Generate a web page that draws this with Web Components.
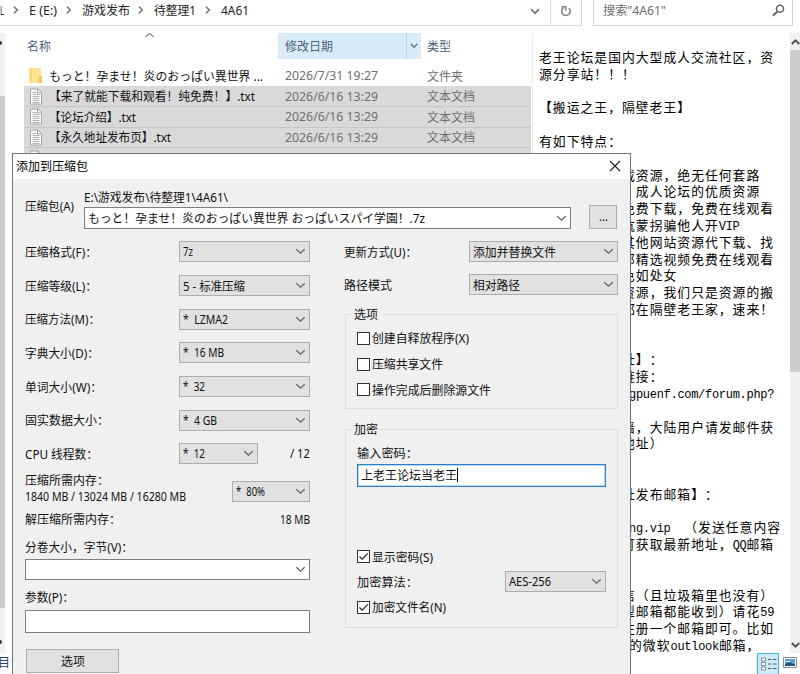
<!DOCTYPE html>
<html lang="zh-CN">
<head>
<meta charset="utf-8">
<title>4A61</title>
<style>
html,body{margin:0;width:800px;height:674px;overflow:hidden;background:#fff}
body{position:relative;font-family:"Noto Sans","Noto Sans CJK SC",sans-serif;font-size:12px;color:#111;text-spacing-trim:space-all}
archive-dialog{position:absolute;left:12px;top:153px}
</style>
</head>
<body>
<file-explorer></file-explorer>
<archive-dialog></archive-dialog>
<script>
const define = (name, markup, init) => {
  const tpl = document.createElement('template');
  tpl.innerHTML = markup;
  customElements.define(name, class extends HTMLElement {
    connectedCallback() {
      if (this.shadowRoot) return;
      this.attachShadow({mode: 'open'}).appendChild(tpl.content.cloneNode(true));
      if (init) init(this, this.shadowRoot);
    }
  });
};

define('preview-pane', `
<style>
:host{display:block;box-sizing:border-box;width:258px;padding:49px 0 0 6px;border-left:1px solid #ececec;overflow:hidden;color:#000;
 font-family:"Noto Sans CJK SC",sans-serif;font-size:12.8px}
div{height:16.8px;line-height:16.8px;white-space:pre;letter-spacing:1.03px}
div.c{padding-left:83px} div.h{padding-left:90px}
i{font:normal 12px "Liberation Mono",monospace;letter-spacing:-.29px}
</style>
<div>老王论坛是国内大型成人交流社区，资</div>
<div>源分享站！！！</div>
<div></div>
<div>【搬运之王，隔壁老王】</div>
<div></div>
<div>有如下特点：</div>
<div></div>
<div class="c">载资源，绝无任何套路</div>
<div class="c">　成人论坛的优质资源</div>
<div class="c">免费下载，免费在线观看</div>
<div class="c">坑蒙拐骗他人开<i>VIP</i></div>
<div class="c">其他网站资源代下载、找</div>
<div class="c">部精选视频免费在线观看</div>
<div class="c">色如处女</div>
<div class="c">资源，我们只是资源的搬</div>
<div class="c">都在隔壁老王家，速来！</div>
<div></div>
<div></div>
<div class="c">址】：</div>
<div class="c">链接：</div>
<div class="h"><i>gpuenf.com/forum.php?</i></div>
<div></div>
<div class="c">墙，大陆用户请发邮件获</div>
<div class="c">地址）</div>
<div></div>
<div></div>
<div class="c">址发布邮箱】：</div>
<div></div>
<div class="h"><i>ng.vip</i>　（发送任意内容</div>
<div class="c">可获取最新地址，<i>QQ</i>邮箱</div>
<div></div>
<div></div>
<div class="c">信（且垃圾箱里也没有）</div>
<div class="c">型邮箱都能收到）请花<i>59</i></div>
<div class="c">注册一个邮箱即可。比如</div>
<div class="h">的微软<i>outlook</i>邮箱，</div>
`);

define('file-row', `
<style>
:host{display:grid;grid-template-columns:21px 236px 142px 1fr;align-items:center;height:20.7px;box-sizing:border-box;padding-left:4px;white-space:nowrap;color:#707070}
:host([sel]){background:#d9d9d9;border-bottom:1px solid #c6c6c6}
.n{color:#111}
svg{display:block}
.doc{display:none} :host([sel]) .doc{display:block} :host([sel]) .fold{display:none}
</style>
<span>
<svg class="fold" width="16" height="17" viewBox="0 0 16 17"><path d="M1.500 1h11.500v13l-1 2H1.500z" fill="#ffe391"/><path d="M1.500 1H4v15H1.500z" fill="#f8d775"/><path d="M10.500 9h3.500v7h-3.500z" fill="#f2c85c"/></svg>
<svg class="doc" width="16" height="17" viewBox="0 0 16 17"><path d="M2.500 1h7.500l3.500 3.500V16h-11z" fill="#fbfbfb" stroke="#a2a2a2"/><path d="M9.500 1v4h4" fill="none" stroke="#a2a2a2"/><path d="M4.500 4.500h4M4.500 6.500h7M4.500 8.500h7M4.500 10.500h7M4.500 12.500h7M4.500 14.500h7" stroke="#a8a8a8" stroke-width=".9"/></svg>
</span>
<span class="n"><slot></slot></span>
<slot name="d"></slot>
<slot name="t"></slot>
`);

define('side-scroll', `
<style>
:host{display:flex;flex-direction:column;align-items:center;background:#f0f0f0;overflow:hidden}
i{display:block;width:100%;background:#cdcdcd;height:var(--th)}
b{flex:1} svg{flex:none;display:block}
.u{margin:var(--ut) 0 var(--ub)} .d{margin-bottom:4px}
.dot{display:none;flex:none;width:4px;height:4px;border-radius:0 4px 4px 0;background:#333;margin:8px auto 0 -2px}
:host(.nav) svg{display:none}
:host(.nav) .dot{display:block}
:host(.nav) i{margin-top:51px}
:host(.nav) .e{margin:0 auto 9px -2px}
</style>
<span class="dot"></span>
<svg class="u" width="9" height="8" viewBox="0 0 9 8"><path d="M.8 6 4.500 2.300 8.200 6" fill="none" stroke="#505050" stroke-width="2"/></svg>
<i></i><b></b>
<span class="dot e"></span>
<svg class="d" width="9" height="8" viewBox="0 0 9 8"><path d="M.8 2 4.500 5.700 8.200 2" fill="none" stroke="#505050" stroke-width="2"/></svg>
`);

define('file-explorer', `
<style>
:host{display:flex;flex-direction:column;width:800px;height:674px}
.top{display:flex;height:26px;box-sizing:border-box;white-space:nowrap;overflow:hidden}
.addr{flex:none;width:582px;box-sizing:border-box;border:solid #dadada;border-width:0 1px 1px 0;display:flex}
.crumb{display:grid;grid-template-columns:29px 53px 72px 67px 1fr;width:521px;height:20px;align-items:center;color:#222}
.crumb span{display:flex;align-items:center;justify-content:space-between}
.crumb svg{margin-right:10px}
.drop{width:31px;height:25px;display:flex;justify-content:center;align-items:center;border-right:1px solid #dadada;box-sizing:border-box;padding-bottom:3px}
.ref{width:30px;height:21px;display:flex;justify-content:center;align-items:center}
.search{margin-left:11px;width:200px;height:26px;box-sizing:border-box;border:1px solid #d5d5d5;border-top:0;display:flex;justify-content:space-between;padding:0 7px 5px 9px;align-items:center;color:#6d6d6d}
.main{display:flex;height:620px;margin-top:7px}
.nav{width:5px;--th:512px}
.list{width:527px;box-sizing:border-box;padding:0 1px 0 19px;overflow:hidden}
.head{display:grid;grid-template-columns:254px 128px 15px 1fr;height:26px;align-items:center;color:#4c607a;margin-bottom:6.500px;position:relative}
.head>*{height:26px;display:flex;align-items:center;box-sizing:border-box}
.head>.nm{padding-left:3px}.date{background:#d9ebf9;padding-left:7px}.ar{background:#d9ebf9;border-left:1px solid #b7d5ea;justify-content:center}.ty{padding-left:6px}
.head>.sort{position:absolute;left:120px;top:-2px;height:8px}
side-scroll.r{width:10px;--ut:5px;--ub:4px;--th:322px}
.foot{height:21px;display:flex;justify-content:space-between;color:#25406e}
.foot .l{margin-left:-2px;line-height:20px}
.ic{display:flex;gap:4px;padding-right:3px}
</style>
<div class="top">
 <div class="addr">
  <div class="crumb">
   <span><fit-text w="4" s="12.5">L</fit-text><svg width="6" height="8" viewBox="0 0 6 8"><path d="M1 .8 4.300 4 1 7.200" fill="none" stroke="#666" stroke-width="1.300"/></svg></span>
   <span><fit-text w="28" s="12.5">E (E:)</fit-text><svg width="6" height="8" viewBox="0 0 6 8"><path d="M1 .8 4.300 4 1 7.200" fill="none" stroke="#666" stroke-width="1.300"/></svg></span>
   <span><fit-text w="48" s="12">游戏发布</fit-text><svg width="6" height="8" viewBox="0 0 6 8"><path d="M1 .8 4.300 4 1 7.200" fill="none" stroke="#666" stroke-width="1.300"/></svg></span>
   <span><fit-text w="42" s="12">待整理1</fit-text><svg width="6" height="8" viewBox="0 0 6 8"><path d="M1 .8 4.300 4 1 7.200" fill="none" stroke="#666" stroke-width="1.300"/></svg></span>
   <span><fit-text w="28" s="12">4A61</fit-text></span>
  </div>
  <div class="drop"><svg width="10" height="7" viewBox="0 0 10 7"><path d="M1 1.200 5 5.200 9 1.200" fill="none" stroke="#777" stroke-width="1.800"/></svg></div>
  <div class="ref"><svg width="12" height="12" viewBox="0 0 12 12"><path d="M8.800 3A4.300 4.300 0 1 1 3.400 2.800" fill="none" stroke="#808080" stroke-width="1.500"/><path d="M1.500 1.700H5.700V5.700" fill="none" stroke="#808080" stroke-width="1.500"/></svg></div>
 </div>
 <div class="search"><fit-text w="63" s="12">搜索"4A61"</fit-text><svg width="13" height="13" viewBox="0 0 13 13"><circle cx="8" cy="4.800" r="3.500" fill="none" stroke="#666" stroke-width="1.600"/><path d="M5.300 7.500 1 11.700" stroke="#666" stroke-width="1.900"/></svg></div>
</div>
<div class="main">
 <side-scroll class="nav"></side-scroll>
 <div class="list">
  <div class="head">
   <span class="sort"><svg width="11" height="6" viewBox="0 0 11 6"><path d="M1.500 5 5.500 1.200 9.500 5" fill="none" stroke="#888" stroke-width="1.200"/></svg></span>
   <span class="nm"><fit-text w="24" s="12">名称</fit-text></span><span class="date"><fit-text w="48" s="12">修改日期</fit-text></span>
   <span class="ar"><svg width="8" height="6" viewBox="0 0 8 6"><path d="M.8 1 4 4.200 7.200 1" fill="none" stroke="#5a7288" stroke-width="1.400"/></svg></span>
   <span class="ty"><fit-text w="24" s="12">类型</fit-text></span>
  </div>
  <file-row><fit-text w="214" s="12">もっと！孕ませ！炎のおっぱい異世界 ...</fit-text><fit-text slot="d" w="93" s="12">2026/7/31 19:27</fit-text><fit-text slot="t" w="36" s="12">文件夹</fit-text></file-row>
  <file-row sel><fit-text w="206" s="12">【来了就能下载和观看！纯免费！】.txt</fit-text><fit-text slot="d" w="93" s="12">2026/6/16 13:29</fit-text><fit-text slot="t" w="48" s="12">文本文档</fit-text></file-row>
  <file-row sel><fit-text w="87" s="12">【论坛介绍】.txt</fit-text><fit-text slot="d" w="93" s="12">2026/6/16 13:29</fit-text><fit-text slot="t" w="48" s="12">文本文档</fit-text></file-row>
  <file-row sel><fit-text w="122" s="12">【永久地址发布页】.txt</fit-text><fit-text slot="d" w="93" s="12">2026/6/16 13:29</fit-text><fit-text slot="t" w="48" s="12">文本文档</fit-text></file-row>
  <file-row sel></file-row>
 </div>
 <preview-pane></preview-pane>
 <side-scroll class="r"></side-scroll>
</div>
<div class="foot"><span class="l">目</span>
 <span class="ic"><svg width="22" height="22" viewBox="0 0 22 22"><path d="M.5.5h21V23H.5z" fill="#cdeaf8" stroke="#45aee0"/><path d="M4.500 5h4v3h-4zM4.500 9.500h4v3h-4zM4.500 14h4v3h-4z" fill="#fff" stroke="#7a8894" stroke-width=".9"/><path d="M11 6.500h3.500M16 6.500h3.500M11 11h3.500M16 11h3.500M11 15.500h3.500M16 15.500h3.500" stroke="#4c5a66"/></svg>
 <svg width="14" height="22" viewBox="0 0 14 22"><path d="M.5 4.500h13v10H.5z" fill="#fff" stroke="#8a8a8a"/><path d="M2 6h10v7H2z" fill="#5d9cdc"/><path d="M2 13v-2l4-2 6 2.500V13z" fill="#24527e"/><path d="M3 8.500h4" stroke="#e8f4ff"/></svg></span>
</div>
<style>preview-pane{padding-top:16px}</style>
`);

define('win-combo', `
<style>
:host{display:flex;box-sizing:border-box;height:21px;align-items:center;justify-content:space-between;border:1px solid #adadad;background:#e1e1e1;padding:0 3px 0 3px;flex:none}
:host([edit]){background:#fff;border-color:#7f7f7f}
</style>
<span><slot></slot></span>
<svg width="11" height="7" viewBox="0 0 11 7"><path d="M1.300 1.200 5.500 5.200 9.700 1.200" fill="none" stroke="#606060" stroke-width="1.200"/></svg>
`);

define('win-check', `
<style>
:host{display:flex;align-items:center;gap:2px;height:26px}
i{width:13px;height:13px;box-sizing:border-box;border:1px solid #333;background:#fff;display:block}
svg{display:none} :host([on]) svg{display:block}
</style>
<i><svg width="11" height="11" viewBox="0 0 11 11"><path d="M1.500 5.500 4.200 8.200 9.800 2.300" fill="none" stroke="#222" stroke-width="1.200"/></svg></i><slot></slot>
`);

define('win-group', `
<style>
:host{display:block;box-sizing:border-box;border:1px solid #dcdcdc;padding:0 11px}
.t{display:flex;height:16px;margin:-9px 0 0 -5px}
.t span{background:#f0f0f0;padding:0 3px 0 2px;line-height:17px}
</style>
<div class="t"><span><slot name="title"></slot></span></div>
<slot></slot>
`);

define('win-button', `
<style>:host{display:flex;box-sizing:border-box;align-items:center;justify-content:center;background:#e1e1e1;border:1px solid #adadad}</style><slot></slot>
`);

define('opt-row', `
<style>:host{display:flex;box-sizing:border-box;align-items:center;justify-content:space-between}</style><slot></slot>
`);

define('archive-dialog', `
<style>
:host{display:block;box-sizing:border-box;width:619px;height:530px;background:#f0f0f0;border:1px solid #747474}
.title{height:25px;box-sizing:border-box;background:#fff;display:flex;align-items:center;justify-content:space-between;padding:0 9px 1px 3px;color:#000}
.arch{display:flex;height:56px;padding-left:12px;box-sizing:border-box}
.arch>.lb{width:59px;padding-top:18px}
.arch>.mid{width:487px;padding-top:11px}
.mid .p{height:17px;line-height:16px}
.mid win-combo{height:22px}
.arch win-button{width:28px;height:24px;margin:26px 0 0 18px;padding-bottom:2px}
.cols{display:flex;padding-left:12px}
.left{width:285px}
.left>opt-row{height:33.7px}
.w{width:131px}
.right{margin-left:34px;width:274px}
.right>opt-row{height:33px}
.right>opt-row win-combo{width:149px}
.mem{line-height:15.500px}
.in{box-sizing:border-box;height:23px;background:#fff;border:1px solid #7f7f7f}
.pw{border:1px solid #2a7fc9;display:flex;align-items:center;padding-left:3px;height:23px;box-shadow:inset 0 0 0 .5px #7db4e0;margin-bottom:57px;padding-bottom:2px}
.pw b{width:1px;height:14px;background:#000}
</style>
<div class="title"><fit-text w="72" s="12">添加到压缩包</fit-text><svg width="12" height="12" viewBox="0 0 12 12"><path d="M1 1 11 11M11 1 1 11" stroke="#222" stroke-width="1.200"/></svg></div>
<div class="arch">
 <div class="lb"><fit-text w="49" s="12">压缩包(A)</fit-text></div>
 <div class="mid"><div class="p"><fit-text w="144" s="12">E:\\游戏发布\\待整理1\\4A61\\</fit-text></div>
 <win-combo edit><fit-text w="337" s="12">もっと！孕ませ！炎のおっぱい異世界 おっぱいスパイ学園！.7z</fit-text></win-combo></div>
 <win-button><fit-text w="9" s="12">...</fit-text></win-button>
</div>
<div class="cols">
 <div class="left">
  <opt-row><fit-text w="72" s="12">压缩格式(F)：</fit-text><win-combo class="w"><fit-text w="10" s="12">7z</fit-text></win-combo></opt-row>
  <opt-row><fit-text w="72" s="12">压缩等级(L)：</fit-text><win-combo class="w"><fit-text w="62" s="12">5 - 标准压缩</fit-text></win-combo></opt-row>
  <opt-row><fit-text w="75" s="12">压缩方法(M)：</fit-text><win-combo class="w"><fit-text w="45" s="12">*&nbsp; LZMA2</fit-text></win-combo></opt-row>
  <opt-row><fit-text w="74" s="12">字典大小(D)：</fit-text><win-combo class="w"><fit-text w="41" s="12">*&nbsp; 16 MB</fit-text></win-combo></opt-row>
  <opt-row><fit-text w="77" s="12">单词大小(W)：</fit-text><win-combo class="w"><fit-text w="22" s="12">*&nbsp; 32</fit-text></win-combo></opt-row>
  <opt-row><fit-text w="84" s="12">固实数据大小：</fit-text><win-combo class="w"><fit-text w="34" s="12">*&nbsp; 4 GB</fit-text></win-combo></opt-row>
  <opt-row><fit-text w="73" s="12">CPU 线程数：</fit-text><win-combo style="width:79px;margin-left:81px;margin-right:auto"><fit-text w="22" s="12">*&nbsp; 12</fit-text></win-combo><fit-text w="20" s="12">/ 12</fit-text></opt-row>
  <opt-row style="height:36px"><div class="mem"><fit-text w="84" s="12">压缩所需内存：</fit-text><br><fit-text w="161" s="12">1840 MB / 13024 MB / 16280 MB</fit-text></div><win-combo style="width:78px;margin-top:5px"><fit-text w="29" s="12">*&nbsp; 80%</fit-text></win-combo></opt-row>
  <opt-row style="height:25px"><fit-text w="96" s="12">解压缩所需内存：</fit-text><fit-text w="30" s="12">18 MB</fit-text></opt-row>
  <opt-row style="height:27px;padding-top:3px"><fit-text w="108" s="12">分卷大小，字节(V)：</fit-text></opt-row>
  <win-combo edit></win-combo>
  <opt-row style="height:30px;padding-top:4px"><fit-text w="49" s="12">参数(P)：</fit-text></opt-row>
  <div class="in"></div>
  <win-button style="width:93px;height:24px;margin:16px 0 0 1px"><fit-text w="24" s="12">选项</fit-text></win-button>
 </div>
 <div class="right">
  <opt-row><fit-text w="73" s="12">更新方式(U)：</fit-text><win-combo><fit-text w="83" s="12">添加并替换文件</fit-text></win-combo></opt-row>
  <opt-row><fit-text w="48" s="12">路径模式</fit-text><win-combo><fit-text w="47" s="12">相对路径</fit-text></win-combo></opt-row>
  <win-group style="margin:13px 0 0 1px;height:95px"><fit-text slot="title" w="24" s="12">选项</fit-text>
   <div style="height:3px"></div>
   <win-check><fit-text w="97" s="12">创建自释放程序(X)</fit-text></win-check>
   <win-check><fit-text w="71" s="12">压缩共享文件</fit-text></win-check>
   <win-check style="height:25px"><fit-text w="119" s="12">操作完成后删除源文件</fit-text></win-check>
  </win-group>
  <win-group style="margin:20px 0 0 1px;height:199px"><fit-text slot="title" w="24" s="12">加密</fit-text>
   <opt-row style="height:27px;padding-top:4px"><fit-text w="61" s="12">输入密码：</fit-text></opt-row>
   <div class="in pw"><fit-text w="96" s="12">上老王论坛当老王</fit-text><b></b></div>
   <win-check on style="height:25px"><fit-text w="61" s="12">显示密码(S)</fit-text></win-check>
   <opt-row style="height:25px"><fit-text w="61" s="12">加密算法：</fit-text><win-combo style="width:101px"><fit-text w="42" s="12">AES-256</fit-text></win-combo></opt-row>
   <win-check on><fit-text w="74" s="12">加密文件名(N)</fit-text></win-check>
  </win-group>
 </div>
</div>
`);

/* Sets its text on one line, stretched horizontally to the width in "w". */
define('fit-text', `
<style>:host{display:inline-block;white-space:nowrap;vertical-align:top}span{display:inline-block;transform-origin:0 50%}</style><span><slot></slot></span>
`, (el, root) => {
  const s = root.querySelector('span'), w = +el.getAttribute('w');
  el.style.fontSize = el.getAttribute('s') + 'px';
  const n = s.getBoundingClientRect().width;
  s.style.transform = 'scaleX(' + (w / n) + ')';
  el.style.width = w + 'px';
});
</script>
</body>
</html>
